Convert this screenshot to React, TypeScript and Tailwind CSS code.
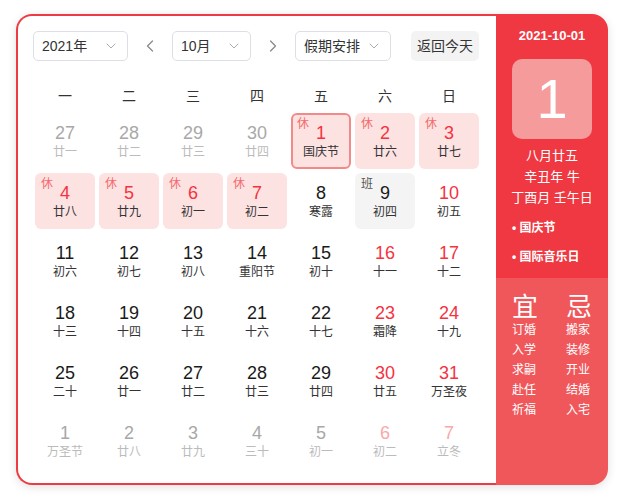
import React from 'react';
import { ChevronDown, ChevronLeft, ChevronRight } from 'lucide-react';

type Day = {
  n: number;
  lunar: string;
  out?: boolean;
  red?: boolean;
  rest?: boolean;
  work?: boolean;
  selected?: boolean;
};

const weeks: Day[][] = [
  [
    { n: 27, lunar: '廿一', out: true },
    { n: 28, lunar: '廿二', out: true },
    { n: 29, lunar: '廿三', out: true },
    { n: 30, lunar: '廿四', out: true },
    { n: 1, lunar: '国庆节', red: true, rest: true, selected: true },
    { n: 2, lunar: '廿六', red: true, rest: true },
    { n: 3, lunar: '廿七', red: true, rest: true },
  ],
  [
    { n: 4, lunar: '廿八', red: true, rest: true },
    { n: 5, lunar: '廿九', red: true, rest: true },
    { n: 6, lunar: '初一', red: true, rest: true },
    { n: 7, lunar: '初二', red: true, rest: true },
    { n: 8, lunar: '寒露' },
    { n: 9, lunar: '初四', work: true },
    { n: 10, lunar: '初五', red: true },
  ],
  [
    { n: 11, lunar: '初六' },
    { n: 12, lunar: '初七' },
    { n: 13, lunar: '初八' },
    { n: 14, lunar: '重阳节' },
    { n: 15, lunar: '初十' },
    { n: 16, lunar: '十一', red: true },
    { n: 17, lunar: '十二', red: true },
  ],
  [
    { n: 18, lunar: '十三' },
    { n: 19, lunar: '十四' },
    { n: 20, lunar: '十五' },
    { n: 21, lunar: '十六' },
    { n: 22, lunar: '十七' },
    { n: 23, lunar: '霜降', red: true },
    { n: 24, lunar: '十九', red: true },
  ],
  [
    { n: 25, lunar: '二十' },
    { n: 26, lunar: '廿一' },
    { n: 27, lunar: '廿二' },
    { n: 28, lunar: '廿三' },
    { n: 29, lunar: '廿四' },
    { n: 30, lunar: '廿五', red: true },
    { n: 31, lunar: '万圣夜', red: true },
  ],
  [
    { n: 1, lunar: '万圣节', out: true },
    { n: 2, lunar: '廿八', out: true },
    { n: 3, lunar: '廿九', out: true },
    { n: 4, lunar: '三十', out: true },
    { n: 5, lunar: '初一', out: true },
    { n: 6, lunar: '初二', out: true, red: true },
    { n: 7, lunar: '立冬', out: true, red: true },
  ],
];

const weekdays = ['一', '二', '三', '四', '五', '六', '日'];
const yi = ['订婚', '入学', '求嗣', '赴任', '祈福'];
const ji = ['搬家', '装修', '开业', '结婚', '入宅'];

const Select: React.FC<{ label: string; w: string }> = ({ label, w }) => (
  <div className={`${w} h-[30px] flex items-center justify-between pl-[8px] pr-[8px] border border-[#dcdfe6] rounded-[5px] text-[14px] text-[#333] bg-white`}>
    <span>{label}</span>
    <ChevronDown size={16} strokeWidth={1.5} className="text-[#a8abb2]" />
  </div>
);

const Cell: React.FC<{ d: Day }> = ({ d }) => {
  let box = '';
  if (d.selected) box = 'bg-[#fde2e2] border-2 border-[#f38a8a]';
  else if (d.rest) box = 'bg-[#fde2e2]';
  else if (d.work) box = 'bg-[#f4f4f5]';

  let num = 'text-[#1a1a1a]';
  if (d.out) num = d.red ? 'text-[#f8a9a9]' : 'text-[#a8a8a8]';
  else if (d.red) num = 'text-[#f5333f]';
  const lunar = d.out ? 'text-[#bbbbbb]' : 'text-[#333]';

  return (
    <div className="h-[60px] p-[2px]">
      <div className={`relative h-full rounded-[6px] flex flex-col items-center justify-center ${box}`}>
        {d.rest && (
          <span className={`absolute ${d.selected ? 'left-[4px] top-[1px]' : 'left-[6px] top-[3px]'} text-[12px] leading-[16px] text-[#f26b6b]`}>休</span>
        )}
        {d.work && (
          <span className="absolute left-[6px] top-[3px] text-[12px] leading-[16px] text-[#555]">班</span>
        )}
        <span className={`text-[18px] leading-[22px] ${num}`}>{d.n}</span>
        <span className={`text-[12px] leading-[16px] ${lunar}`}>{d.lunar}</span>
      </div>
    </div>
  );
};

const App: React.FC = () => {
  return (
    <div
      className="w-[636px] h-[503px] bg-white pl-[16px] pt-[14px]"
      style={{ fontFamily: '"Liberation Sans", "Noto Sans CJK SC", sans-serif' }}
    >
      <div className="w-[592px] h-[471px] flex rounded-[16px] shadow-[0_2px_10px_rgba(0,0,0,0.12)]">
        <div className="w-[480px] bg-white border-2 border-r-0 border-[#ee3a43] rounded-l-[16px] px-[15px] pt-[15px]">
          <div className="flex items-center h-[30px]">
            <Select label="2021年" w="w-[95px]" />
            <div className="w-[44px] flex justify-center text-[#8a8a8a]">
              <ChevronLeft size={20} strokeWidth={1.5} />
            </div>
            <Select label="10月" w="w-[79px]" />
            <div className="w-[44px] flex justify-center text-[#8a8a8a]">
              <ChevronRight size={20} strokeWidth={1.5} />
            </div>
            <Select label="假期安排" w="w-[96px]" />
            <div className="ml-[20px] w-[68px] h-[30px] rounded-[5px] bg-[#f3f3f4] flex items-center justify-center text-[14px] text-[#333]">
              返回今天
            </div>
          </div>
          <div className="grid grid-cols-7 mt-[20px] h-[30px] items-center text-center text-[14px] text-[#333]">
            {weekdays.map(w => (
              <div key={w}>{w}</div>
            ))}
          </div>
          <div className="grid grid-cols-7">
            {weeks.flat().map((d, i) => (
              <Cell key={i} d={d} />
            ))}
          </div>
        </div>
        <div className="w-[112px] flex flex-col text-white rounded-r-[16px] overflow-hidden">
          <div className="h-[264px] bg-[#ef3841] px-[16px] pt-[12px]">
            <div className="h-[20px] leading-[20px] text-center text-[13px] font-bold">2021-10-01</div>
            <div className="mt-[13px] w-[80px] h-[80px] rounded-[10px] bg-[#f69b9b] flex items-center justify-center text-[56px] leading-none">
              1
            </div>
            <div className="mt-[6px] -mx-[6px] text-center text-[13px] leading-[21px] whitespace-nowrap">
              <div>八月廿五</div>
              <div>辛丑年 牛</div>
              <div>丁酉月 壬午日</div>
            </div>
            <div className="mt-[5px] text-[12px] font-bold whitespace-nowrap">
              <div className="h-[29px] flex items-center">• 国庆节</div>
              <div className="h-[29px] flex items-center">• 国际音乐日</div>
            </div>
          </div>
          <div className="flex-1 bg-[#f0575b] px-[16px] pt-[17px] flex justify-between">
            <div>
              <div className="text-[26px] leading-[24px]">宜</div>
              <div className="mt-[1px] text-[12px] leading-[20px]">
                {yi.map(t => (
                  <div key={t}>{t}</div>
                ))}
              </div>
            </div>
            <div>
              <div className="text-[26px] leading-[24px]">忌</div>
              <div className="mt-[1px] text-[12px] leading-[20px]">
                {ji.map(t => (
                  <div key={t}>{t}</div>
                ))}
              </div>
            </div>
          </div>
        </div>
      </div>
    </div>
  );
};

export default App;
